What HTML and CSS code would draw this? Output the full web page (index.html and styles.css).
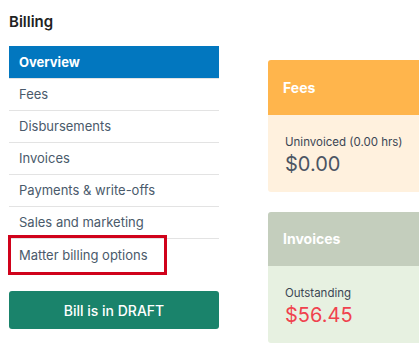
FILE: index.html
```html
<!DOCTYPE html>
<html>
<head>
<meta charset="utf-8">
<link rel="stylesheet" href="styles.css">
</head>
<body>
<div class="page">
  <aside class="side">
    <h1 class="title">Billing</h1>
    <ul class="nav">
      <li class="item active">Overview</li>
      <li class="item">Fees</li>
      <li class="item">Disbursements</li>
      <li class="item">Invoices</li>
      <li class="item">Payments &amp; write-offs</li>
      <li class="item">Sales and marketing</li>
      <li class="item last">Matter billing options<span class="highlight"></span></li>
    </ul>
    <button class="draft">Bill is in DRAFT</button>
  </aside>
  <main class="cards">
    <section class="card fees">
      <div class="card-head">Fees</div>
      <div class="card-body">
        <div class="label">Uninvoiced (0.00 hrs)</div>
        <div class="amount">$0.00</div>
      </div>
    </section>
    <section class="card invoices">
      <div class="card-head">Invoices</div>
      <div class="card-body">
        <div class="label">Outstanding</div>
        <div class="amount red">$56.45</div>
      </div>
    </section>
  </main>
</div>
</body>
</html>
```
FILE: styles.css
```css
* { box-sizing: border-box; }
html, body { margin: 0; padding: 0; overflow: hidden; }
body {
  font-family: Inter, "Liberation Sans", sans-serif;
  background: #fff;
  width: 419px;
  height: 357px;
}
.page {
  display: flex;
  gap: 49px;
  padding: 0 0 0 9px;
}
.side {
  width: 210px;
  flex: none;
}
.title {
  margin: 0;
  padding-top: 13px;
  height: 46px;
  font-size: 15px;
  font-weight: 600;
  color: #222;
  line-height: 18px;
}
.nav {
  list-style: none;
  margin: 0;
  padding: 0;
}
.item {
  position: relative;
  height: 32px;
  line-height: 31px;
  padding-left: 10px;
  font-size: 13px;
  color: #4a5a6b;
  border-bottom: 1px solid #e3e3e3;
}
.item.active {
  height: 33px;
  line-height: 32px;
  background: #0277bf;
  background-clip: padding-box;
  color: #fff;
  font-weight: 700;
}
.item.last { border-bottom: none; line-height: 33px; }
.highlight {
  position: absolute;
  left: -1px;
  top: -4px;
  width: 159px;
  height: 40px;
  border: 3px solid #d0021b;
}
.draft {
  display: block;
  width: 210px;
  height: 38px;
  margin-top: 20px;
  border: none;
  border-radius: 3px;
  background: #1a836b;
  color: #fff;
  font-family: Inter, "Liberation Sans", sans-serif;
  font-size: 14px;
  font-weight: 500;
}
.cards {
  padding-top: 60px;
  display: flex;
  flex-direction: column;
  gap: 20px;
  width: 200px;
  flex: none;
}
.card {
  border-radius: 3px;
  overflow: hidden;
}
.card-head {
  height: 55px;
  padding-left: 15px;
  line-height: 55px;
  color: #fff;
  font-weight: 700;
  font-size: 14px;
}
.card-body {
  padding: 19px 17px 0 17px;
  height: 77px;
}
.fees .card-head { background: #ffb54c; }
.fees .card-body { background: #fff1de; }
.invoices .card-head { background: #c4cebd; height: 54px; line-height: 54px; }
.invoices .card-body { background: #e7f1e1; }
.label {
  font-size: 11.5px;
  color: #3b4654;
  line-height: 17px;
}
.amount {
  margin-top: 1px;
  font-size: 20px;
  color: #4b5563;
  line-height: 25px;
}
.amount.red { color: #f0424e; }
```
